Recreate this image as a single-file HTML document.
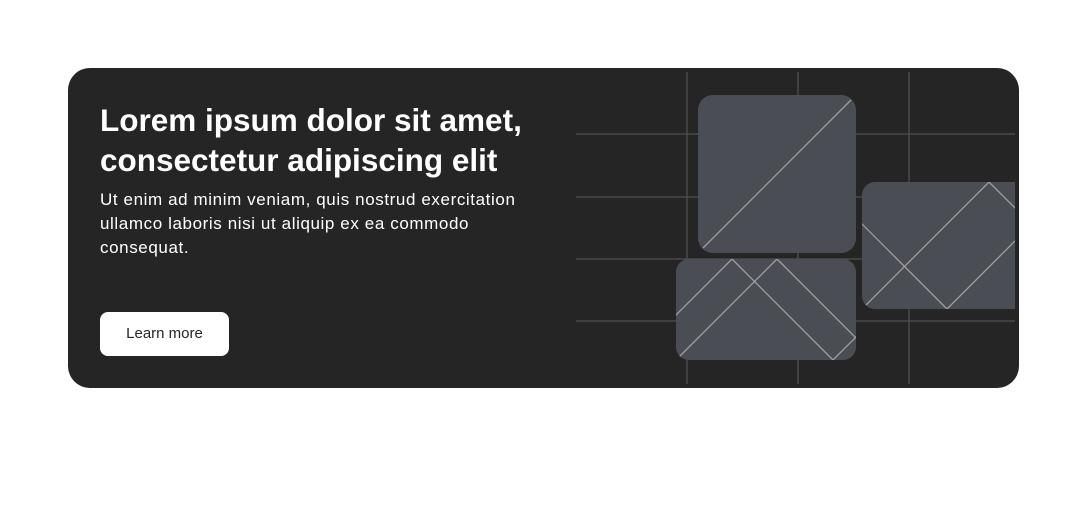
<!DOCTYPE html>
<html><head><meta charset="utf-8"><style>
body{margin:0;width:1087px;height:512px;background:#fff;position:relative;overflow:hidden;font-family:"Liberation Sans",sans-serif}
.card{position:absolute;left:68px;top:68px;width:951px;height:320px;background:#252525;border-radius:22px;overflow:hidden}
h1{position:absolute;left:32px;top:32px;margin:0;color:#fff;font-size:31.5px;line-height:40px;font-weight:bold;white-space:nowrap}
p{position:absolute;left:32px;top:120px;margin:0;color:#fff;font-size:17px;line-height:24px;width:450px;letter-spacing:0.6px}
.btn{position:absolute;left:32px;top:244px;width:129px;height:44px;background:#fff;border-radius:8px;color:#252525;font-size:15px;line-height:44px;text-align:center}
svg{position:absolute;left:0;top:0}
</style></head><body>
<div class="card">
<h1>Lorem ipsum dolor sit amet,<br>consectetur adipiscing elit</h1>
<p>Ut enim ad minim veniam, quis nostrud exercitation ullamco laboris nisi ut aliquip ex ea commodo consequat.</p>
<div class="btn">Learn more</div>
</div>
<svg width="1087" height="512">
<defs>
<clipPath id="c1"><rect x="698" y="95" width="158" height="158" rx="15"/></clipPath>
<clipPath id="c2"><rect x="676" y="259" width="180" height="101" rx="13"/></clipPath>
<clipPath id="c3"><rect x="862" y="182" width="190" height="127" rx="13"/></clipPath>
<clipPath id="cc"><rect x="0" y="0" width="1015" height="512"/></clipPath>
</defs>
<g stroke="#4a4a4a" stroke-width="1.5">
<line x1="687" y1="72" x2="687" y2="384"/><line x1="798" y1="72" x2="798" y2="384"/><line x1="909" y1="72" x2="909" y2="384"/>
<line x1="576" y1="134" x2="1015" y2="134"/><line x1="576" y1="197" x2="1015" y2="197"/><line x1="576" y1="259" x2="1015" y2="259"/><line x1="576" y1="321" x2="1015" y2="321"/>
</g>
<g fill="#4a4d54">
<rect x="698" y="95" width="158" height="158" rx="15"/>
<rect x="676" y="259" width="180" height="101" rx="13"/>
</g>
<g clip-path="url(#cc)">
<rect x="862" y="182" width="190" height="127" rx="13" fill="#4a4d54"/>
<g stroke="#a0a0a0" stroke-width="1.3" fill="none" clip-path="url(#c3)"><polyline points="855,217 947,309 1030,226"/><polyline points="866,305 989,182 1030,223"/></g>
</g>
<g stroke="#a0a0a0" stroke-width="1.3" fill="none">
<g clip-path="url(#c1)"><line x1="703" y1="248" x2="851" y2="100"/></g>
<g clip-path="url(#c2)"><polyline points="660,331 732,259 833,360 860,333"/><polyline points="679,357 777,259 856,338"/></g>
</g>
</svg>
</body></html>
